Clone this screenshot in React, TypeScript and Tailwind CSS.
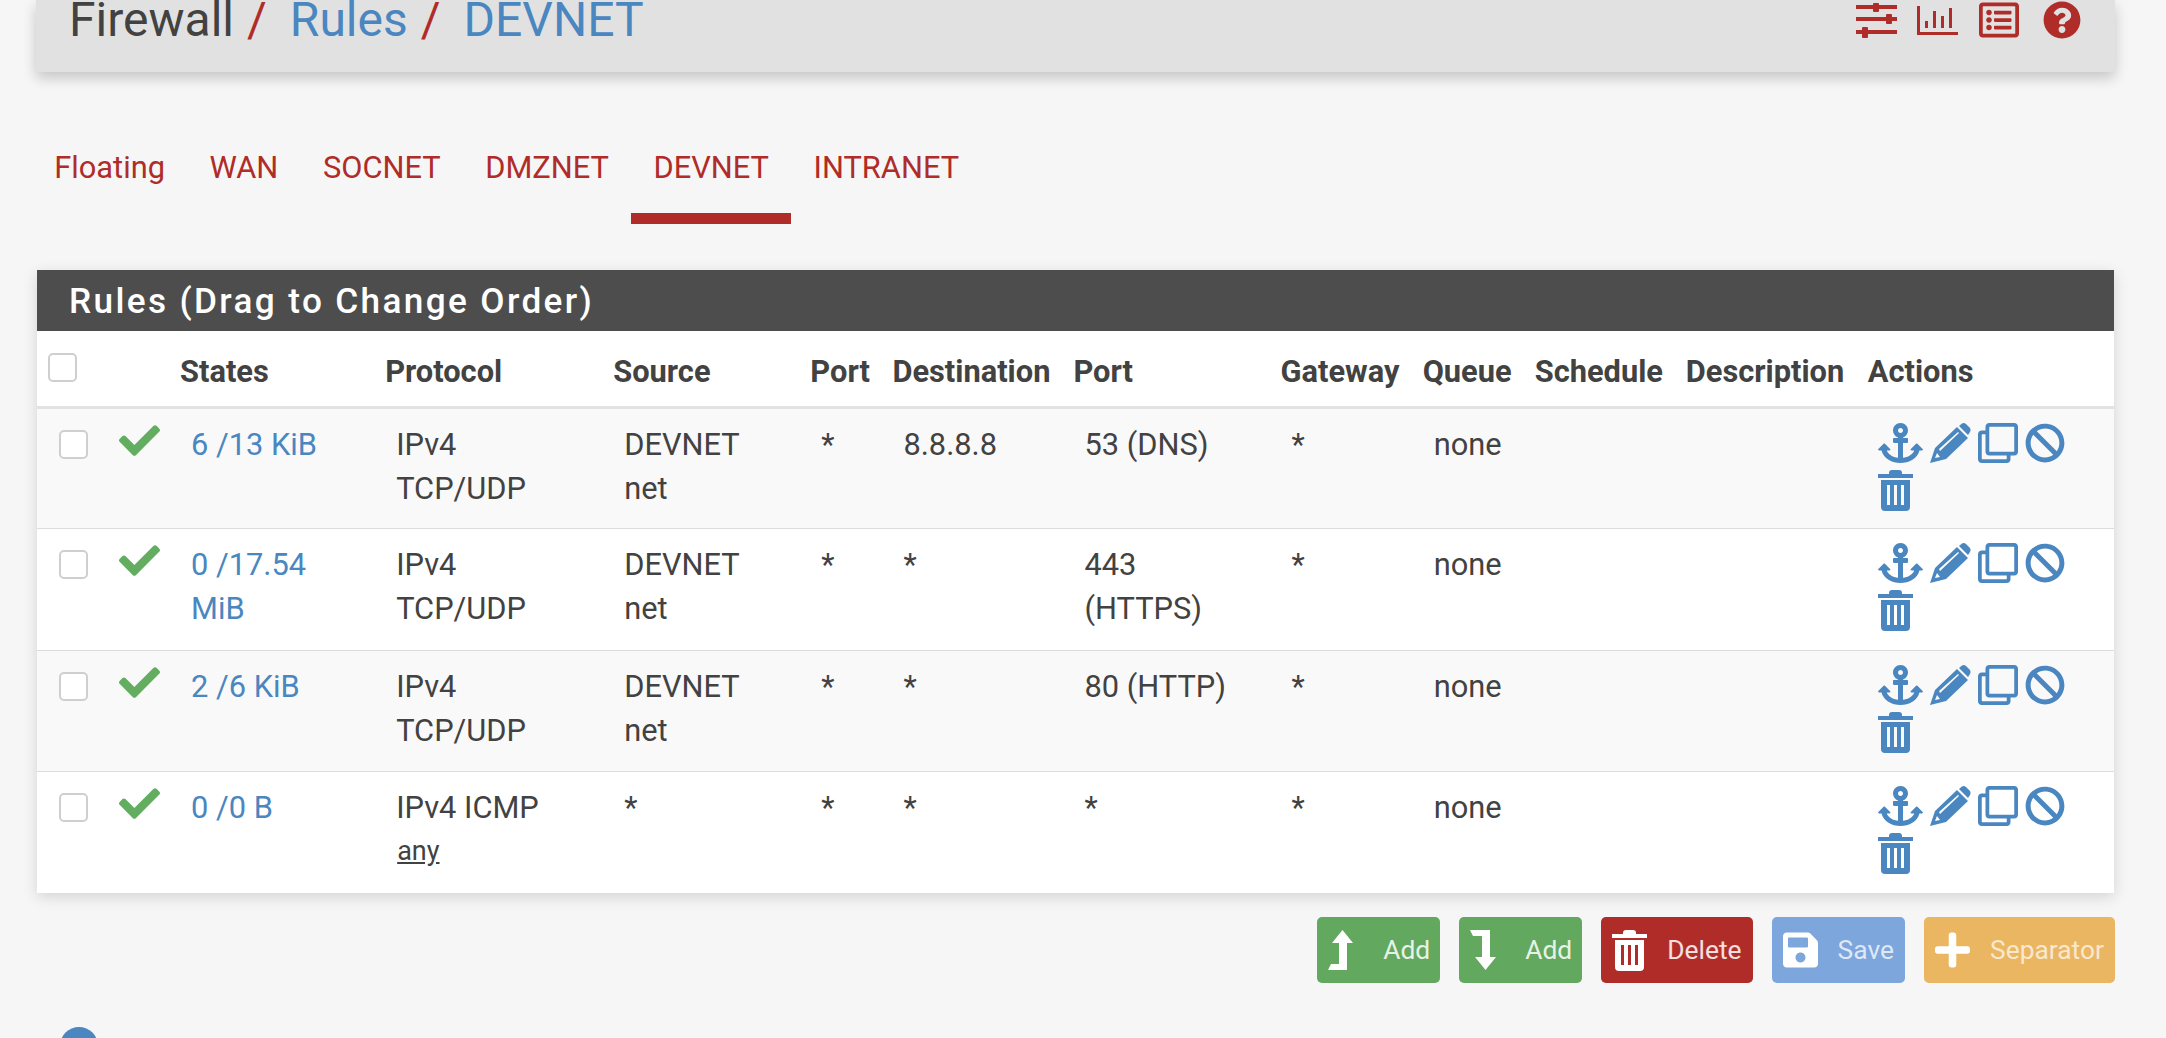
import React from "react";
import {
  FaAnchor,
  FaBan,
  FaCheck,
  FaPlus,
  FaQuestionCircle,
  FaRegClone,
  FaRegListAlt,
  FaSave,
} from "react-icons/fa";

const tabs = ["Floating", "WAN", "SOCNET", "DMZNET", "DEVNET", "INTRANET"];

const columns = [
  { label: "", width: "w-[71px]" },
  { label: "", width: "w-[72px]" },
  { label: "States", width: "w-[205px]" },
  { label: "Protocol", width: "w-[228px]" },
  { label: "Source", width: "w-[197px]" },
  { label: "Port", width: "w-[82px]" },
  { label: "Destination", width: "w-[181px]" },
  { label: "Port", width: "w-[207px]" },
  { label: "Gateway", width: "w-[142px]" },
  { label: "Queue", width: "w-[112px]" },
  { label: "Schedule", width: "w-[151px]" },
  { label: "Description", width: "w-[182px]" },
  { label: "Actions", width: "w-[246px]" },
];

const rules = [
  { states: "6 /13 KiB", protocol: "IPv4\nTCP/UDP", source: "DEVNET\nnet", dest: "8.8.8.8", port: "53 (DNS)" },
  { states: "0 /17.54\nMiB", protocol: "IPv4\nTCP/UDP", source: "DEVNET\nnet", dest: "*", port: "443\n(HTTPS)" },
  { states: "2 /6 KiB", protocol: "IPv4\nTCP/UDP", source: "DEVNET\nnet", dest: "*", port: "80 (HTTP)" },
  { states: "0 /0 B", protocol: "IPv4 ICMP", any: true, source: "*", dest: "*", port: "*" },
];

const SlidersIcon = () => (
  <svg viewBox="0 0 41 35" className="w-[41px] h-[35px]" fill="currentColor">
    <rect x="0" y="2" width="41" height="4" />
    <rect x="17" y="0" width="6" height="9" rx="1" />
    <rect x="0" y="14" width="41" height="4" />
    <rect x="30" y="11" width="6" height="10" rx="1" />
    <rect x="0" y="27" width="41" height="4" />
    <rect x="6" y="24" width="6" height="11" rx="1" />
  </svg>
);

const ChartIcon = () => (
  <svg viewBox="0 0 41 29" className="w-[41px] h-[29px] -ml-[1px]" fill="currentColor">
    <rect x="0" y="0" width="3" height="29" />
    <rect x="0" y="26" width="41" height="3" />
    <rect x="8" y="15" width="3" height="7" />
    <rect x="16" y="5" width="3" height="17" />
    <rect x="24" y="10" width="3" height="12" />
    <rect x="32" y="2" width="3" height="20" />
  </svg>
);

const PencilIcon = () => (
  <svg viewBox="0 0 41 40" className="w-[41px] h-[40px]" fill="currentColor">
    <path
      fillRule="evenodd"
      d="M0 40 L5 25 L27 4 L38 15 L16 36 Z M7 30 L5 35 L10 34 Z M9 26 L10 28 L29 10 L28 9 Z"
    />
    <path d="M29 3 L32 0.5 Q34 -0.5 36 1 L40 5 Q41 7 40 9 L38 12 Z" />
  </svg>
);

const TrashIcon = () => (
  <svg viewBox="0 0 35 41" className="w-[35px] h-[41px]" fill="currentColor">
    <path d="M11 3 Q11 0 14 0 H21 Q24 0 24 3 V4 H35 V8 H0 V4 H11 Z" />
    <path
      fillRule="evenodd"
      d="M3 10 H32 V37 Q32 41 28 41 H7 Q3 41 3 37 Z M9 15 V35 H12 V15 Z M16 15 V35 H19 V15 Z M23 15 V35 H26 V15 Z"
    />
  </svg>
);

const LevelUpIcon = () => (
  <svg viewBox="0 0 26 40" className="w-[26px] h-[40px] mr-[9px]" fill="currentColor">
    <path d="M14.5 0 L25 13 H19 V40 H0 L3 34 H11 V13 H4 Z" />
  </svg>
);

const LevelDownIcon = () => (
  <svg viewBox="0 0 26 40" className="w-[26px] h-[40px] mr-[9px]" fill="currentColor">
    <path d="M0 0 H20 V27 H26 L15.5 40 L5 27 H12 V6 H3 Z" />
  </svg>
);

const buttons = [
  { label: "Add", bg: "bg-[#62a85e] pr-[10px]", text: "text-white/85", icon: <LevelUpIcon /> },
  { label: "Add", bg: "bg-[#62a85e] pr-[10px]", text: "text-white/85", icon: <LevelDownIcon /> },
  { label: "Delete", bg: "bg-[#b02c28] pr-[11px]", text: "text-white/85", icon: <TrashIcon /> },
  { label: "Save", bg: "bg-[#7ca6dc] pr-[11px]", text: "text-white/75", icon: <FaSave className="w-[35px] h-[40px]" /> },
  { label: "Separator", bg: "bg-[#ebb661] pr-[11px]", text: "text-white/70", icon: <FaPlus className="w-[35px] h-[40px]" /> },
];

const Checkbox = () => (
  <div className="w-[29px] h-[29px] bg-white border-2 border-[#cfcfcf] rounded-[5px]" />
);

export default function App() {
  return (
    <div className="h-screen overflow-hidden bg-[#f6f6f6] pl-[36px] pr-[51px] text-[30.8px] leading-[44px] text-[#424242] font-['Roboto',sans-serif]">
      <div className="h-[72px] bg-[#e1e1e1] rounded-b-[3px] shadow-[0_6px_14px_rgba(0,0,0,0.2)] flex justify-between pl-[33px] pr-[34px]">
        <h1 className="h-[40px] flex items-center text-[48px] font-normal whitespace-nowrap">
          <span>Firewall</span>
          <span className="text-[#b02c28] ml-[13px] mr-[23px]">/</span>
          <span className="text-[#4a86c0]">Rules</span>
          <span className="text-[#b02c28] ml-[13px] mr-[23px]">/</span>
          <span className="text-[#4a86c0]">DEVNET</span>
        </h1>
        <div className="h-[40px] flex items-center gap-[21px] text-[#b02c28]">
          <SlidersIcon />
          <ChartIcon />
          <FaRegListAlt className="w-[40px] h-[40px] mr-[3px]" />
          <FaQuestionCircle className="w-[38px] h-[38px]" />
        </div>
      </div>

      <nav className="flex mt-[73px] -ml-[4px]">
        {tabs.map((tab) => (
          <a
            key={tab}
            className={`h-[79px] pt-[1px] px-[22.3px] text-[#b02c28] ${
              tab === "DEVNET" ? "border-b-[11px] border-[#b02c28]" : ""
            }`}
          >
            {tab}
          </a>
        ))}
      </nav>

      <div className="mt-[46px] ml-[1px] mr-[1px] bg-white shadow-[0_4px_14px_rgba(0,0,0,0.14)]">
        <h2 className="h-[61px] bg-[#4d4d4d] text-white pl-[32px] flex items-center text-[35.2px] font-medium tracking-[2.35px]">
          Rules (Drag to Change Order)
        </h2>
        <table className="w-full table-fixed border-collapse">
          <colgroup>
            {columns.map((col, i) => (
              <col key={i} className={col.width} />
            ))}
          </colgroup>
          <thead>
            <tr className="h-[76px] border-b-[3px] border-[#e2e2e2]">
              <th className="pl-[11px] pb-[2px] align-middle">
                <Checkbox />
              </th>
              {columns.slice(1).map((col, i) => (
                <th key={i} className="text-left font-bold whitespace-nowrap pt-[8px] align-middle">
                  {col.label}
                </th>
              ))}
            </tr>
          </thead>
          <tbody>
            {rules.map((rule, i) => (
              <tr
                key={i}
                className={`h-[121.6px] border-t border-[#dcdcdc] align-top ${
                  i % 2 === 0 ? "bg-[#f9f9f9]" : "bg-white"
                }`}
              >
                <td className="pl-[22px] pt-[21px]">
                  <Checkbox />
                </td>
                <td className="pl-[11px] pt-[11px]">
                  <FaCheck className="w-[41px] h-[41px] text-[#62ad5f]" />
                </td>
                <td className="pl-[11px] pt-[14px] text-[#4a86c0] whitespace-pre-line">{rule.states}</td>
                <td className="pl-[11px] pt-[14px] whitespace-pre-line">
                  {rule.protocol}
                  {rule.any && (
                    <div className="leading-[40px] pl-[1px]">
                      <span className="text-[27px] underline">any</span>
                    </div>
                  )}
                </td>
                <td className="pl-[11px] pt-[14px] whitespace-pre-line">{rule.source}</td>
                <td className="pl-[11px] pt-[14px]">*</td>
                <td className="pl-[11px] pt-[14px]">{rule.dest}</td>
                <td className="pl-[11px] pt-[14px] whitespace-pre-line">{rule.port}</td>
                <td className="pl-[11px] pt-[14px]">*</td>
                <td className="pl-[11px] pt-[14px]">none</td>
                <td />
                <td />
                <td className="pl-[10px] pt-[14px]">
                  <div className="flex flex-wrap gap-x-[7px] gap-y-[7px] text-[#4a86c0] w-[200px]">
                    <FaAnchor className="w-[45px] h-[40px]" />
                    <PencilIcon />
                    <FaRegClone className="w-[40px] h-[40px]" />
                    <FaBan className="w-[40px] h-[40px]" />
                    <TrashIcon />
                  </div>
                </td>
              </tr>
            ))}
          </tbody>
        </table>
      </div>

      <div className="flex justify-end gap-[19px] mt-[24px]">
        {buttons.map((btn, i) => (
          <button
            key={i}
            className={`h-[66px] rounded-[5px] pl-[11px] flex items-center gap-[20px] text-[26.4px] ${btn.bg}`}
          >
            <span className="text-white">{btn.icon}</span>
            <span className={btn.text}>{btn.label}</span>
          </button>
        ))}
      </div>

      <div className="mt-[44px] ml-[24px] w-[38px] h-[38px] rounded-full bg-[#4a86c0]" />
    </div>
  );
}
